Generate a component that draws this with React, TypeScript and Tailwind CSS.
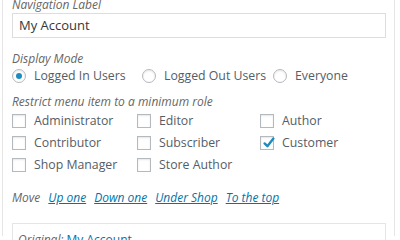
import React from 'react';

const roles = [
  { label: 'Administrator', checked: false },
  { label: 'Editor', checked: false },
  { label: 'Author', checked: false },
  { label: 'Contributor', checked: false },
  { label: 'Subscriber', checked: false },
  { label: 'Customer', checked: true },
  { label: 'Shop Manager', checked: false },
  { label: 'Store Author', checked: false },
];

const modes = [
  { label: 'Logged In Users', checked: true },
  { label: 'Logged Out Users', checked: false },
  { label: 'Everyone', checked: false },
];

const moveLinks = ['Up one', 'Down one', 'Under Shop', 'To the top'];

const Radio: React.FC<{ checked: boolean }> = ({ checked }) => (
  <span className="w-[14px] h-[14px] rounded-full border border-[#b4b9be] bg-white shadow-[inset_0_1px_2px_rgba(0,0,0,0.1)] flex items-center justify-center shrink-0">
    {checked && <span className="w-[6px] h-[6px] rounded-full bg-[#1e8cbe]" />}
  </span>
);

const Checkbox: React.FC<{ checked: boolean }> = ({ checked }) => (
  <span className="w-[14px] h-[14px] border border-[#b4b9be] bg-white shadow-[inset_0_1px_2px_rgba(0,0,0,0.1)] flex items-center justify-center shrink-0 relative">
    {checked && (
      <svg viewBox="0 0 20 20" className="w-[16px] h-[16px] absolute -top-[2px] left-[0px]">
        <path
          d="M4.5 10.5 L8 14 L15.5 4.5"
          fill="none"
          stroke="#1e8cbe"
          strokeWidth="3"
          strokeLinecap="round"
          strokeLinejoin="round"
        />
      </svg>
    )}
  </span>
);

export default function App() {
  return (
    <div
      className="w-[400px] h-[240px] overflow-hidden bg-white text-[#555d66]"
      style={{ fontFamily: '"Open Sans", sans-serif' }}
    >
      <div className="ml-[2px] w-[393px] h-[240px] border-x border-[#e5e5e5] pl-[9px] pr-[8px]">
        <div className="-mt-[4px]">
          <p className="italic text-[12px] leading-[17px] text-[#666]">Navigation Label</p>
          <div className="h-[25px] border border-[#ddd] bg-white px-[6px] flex items-center text-[13px] text-[#32373c]">
            My Account
          </div>

          <p className="mt-[12px] italic text-[12px] leading-[17px] text-[#666]">Display Mode</p>
          <div className="grid grid-cols-[130px_131px_auto] items-center h-[17px] text-[12.3px]">
            {modes.map((m) => (
              <label key={m.label} className="flex items-center gap-[8px]">
                <Radio checked={m.checked} />
                <span>{m.label}</span>
              </label>
            ))}
          </div>

          <p className="mt-[9px] italic text-[12px] leading-[17px] text-[#666]">
            Restrict menu item to a minimum role
          </p>
          <div className="mt-[4px] grid grid-cols-[125px_123px_1fr] gap-y-[8px] text-[12.3px]">
            {roles.map((r) => (
              <label key={r.label} className="flex items-center gap-[8px] h-[14px]">
                <Checkbox checked={r.checked} />
                <span>{r.label}</span>
              </label>
            ))}
          </div>

          <div className="mt-[17px] flex items-center gap-[8px] text-[12px] leading-[17px] italic">
            <span className="text-[#666]">Move</span>
            {moveLinks.map((l) => (
              <a key={l} href="#" className="text-[#0073aa] underline">
                {l}
              </a>
            ))}
          </div>

          <div className="mt-[17px] border border-[#e5e5e5] px-[5px] pt-[7px] h-[40px] text-[12px] leading-[17px]">
            <span className="italic text-[#666]">Original:</span>{' '}
            <a href="#" className="text-[#0073aa] underline">My Account</a>
          </div>
        </div>
      </div>
    </div>
  );
}
